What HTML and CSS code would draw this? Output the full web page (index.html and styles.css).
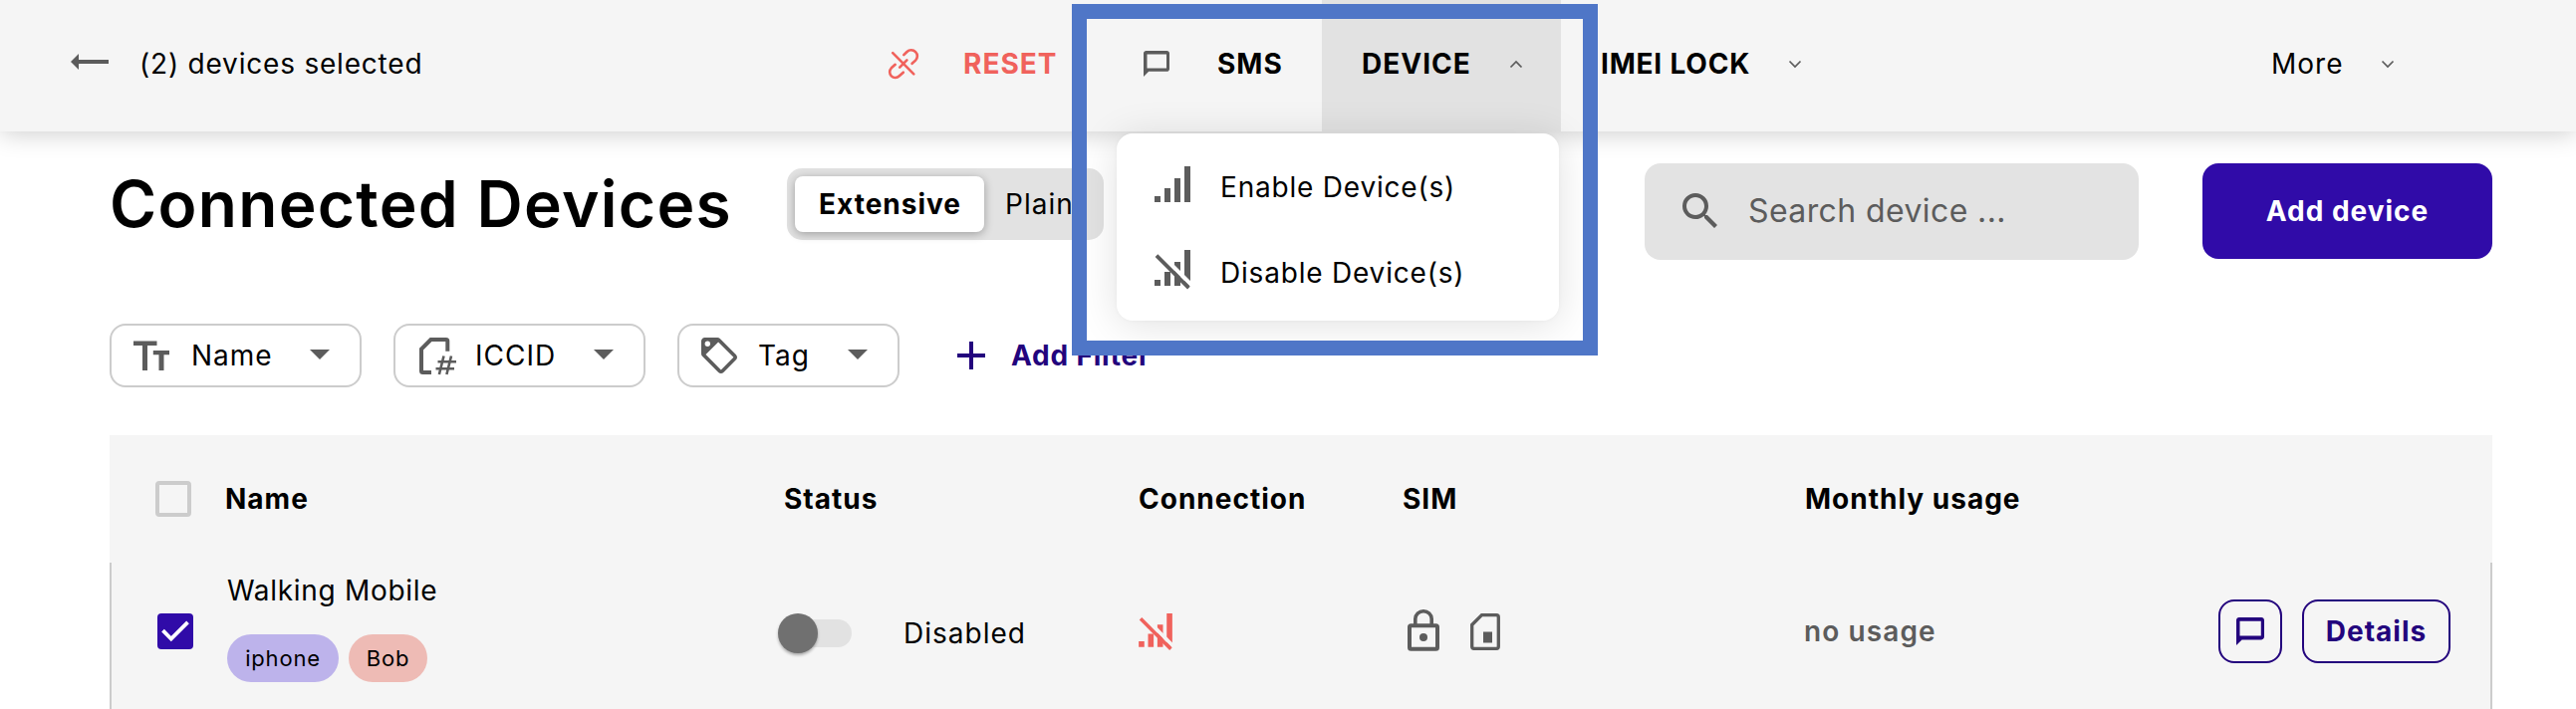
FILE: index.html
```html
<!DOCTYPE html>
<html lang="en">
<head>
<meta charset="utf-8">
<title>Connected Devices</title>
<link rel="stylesheet" href="styles.css">
</head>
<body>
<header class="bar">
  <div class="bar-item bar-back">
    <svg width="38" height="16" viewBox="0 0 38 16"><path d="M0 8l8-8v6h30v4H8v6z" fill="#5c5c5c"/></svg>
    <span>(2) devices selected</span>
  </div>
  <div class="bar-item bar-reset">
    <svg width="30" height="30" viewBox="0 0 30 30" fill="none" stroke="#f0625c" stroke-width="2.6" stroke-linecap="round"><path d="M4.2 4.2L25.3 25.3M15.3 6.2l3.2-3.2a6 6 0 0 1 8.6 0.1a6 6 0 0 1 0 8.5l-3.5 3.2M11.2 18.6l7.2-7.2M6.7 15.8l-3.9 3.5a5.7 5.7 0 0 0 0 8a5.7 5.7 0 0 0 8 0l4-3.6"/></svg>
    <b>RESET</b>
  </div>
  <div class="bar-item bar-sms">
    <svg width="26" height="26" viewBox="2 2 20 20" fill="#5c5c5c"><path d="M20 2H4c-1.1 0-2 .9-2 2v18l4-4h14c1.1 0 2-.9 2-2V4c0-1.1-.9-2-2-2zm-.3 13.5H4.7V4.700h15z"/></svg>
    <b>SMS</b>
  </div>
  <div class="bar-item bar-device">
    <b>DEVICE</b>
    <svg class="chevron up" width="14" height="9" viewBox="0 0 14 9"><path d="M1.5 7.5L7 2l5.500 5.500"/></svg>
    <div class="menu">
      <div class="menu-item">
        <svg width="36" height="36" viewBox="0 0 36 36" fill="#5c5c5c"><path d="M0 30h6v6H0zM10 22h6v14h-6zM20 12h6v24h-6zM30 0h6v36h-6z"/></svg>
        <span>Enable Device(s)</span>
      </div>
      <div class="menu-item">
        <svg width="36" height="40" viewBox="0 0 36 40" fill="#5c5c5c"><path d="M0 30h6v6H0zM10 22h6v14h-6zM20 12h6v24h-6zM30 0h6v36h-6z"/><path d="M7.500 5.500L38 36" stroke="#fff" stroke-width="4"/><path d="M2 5.700l32.400 32.400" stroke="#5c5c5c" stroke-width="3.800"/></svg>
        <span>Disable Device(s)</span>
      </div>
    </div>
  </div>
  <div class="bar-item bar-imei">
    <b>IMEI LOCK</b>
    <svg class="chevron" width="14" height="9" viewBox="0 0 14 9"><path d="M1.500 1.500L7 7l5.500-5.500"/></svg>
  </div>
  <div class="bar-item bar-more">
    <span>More</span>
    <svg class="chevron" width="14" height="9" viewBox="0 0 14 9"><path d="M1.500 1.500L7 7l5.500-5.500"/></svg>
  </div>
</header>

<main class="page">
  <section class="top">
    <h1 class="title">Connected Devices</h1>
    <div class="toggle">
      <div class="toggle-on">Extensive</div>
      <div class="toggle-off">Plain</div>
    </div>
    <div class="search">
      <svg width="35" height="35" viewBox="3 3 17.500 17.500" fill="#5c5c5c"><path d="M9.500,3A6.500,6.500 0 0,1 16,9.500C16,11.110 15.410,12.590 14.440,13.730L14.710,14H15.500L20.500,19L19,20.500L14,15.500V14.710L13.730,14.440C12.590,15.410 11.110,16 9.500,16A6.500,6.500 0 0,1 3,9.500A6.500,6.500 0 0,1 9.500,3M9.500,5C7,5 5,7 5,9.500C5,12 7,14 9.500,14C12,14 14,12 14,9.500C14,7 12,5 9.500,5Z"/></svg>
      <span>Search device ...</span>
    </div>
    <div class="add-device">Add device</div>
  </section>

  <section class="filters">
    <div class="chip chip-name">
      <svg width="36" height="30" viewBox="0 0 36 30" fill="#5c5c5c"><path d="M0 .5h23.500v4.500H14v25H9V5H0zM19.800 10H36v4.300h-5.500V30h-5V14.300h-5.700z"/></svg>
      <span>Name</span>
      <i class="caret"></i>
    </div>
    <div class="chip chip-iccid">
      <svg width="37" height="37" viewBox="0 0 37 37" fill="none" stroke="#5c5c5c"><path d="M28.300 13.700V3.500q0-1.500-1.500-1.500H11.500L2 11.500v22q0 1.500 1.500 1.500H12" stroke-width="4"/><path d="M24.500 18.500l-4.600 18.500M32 18.500L27.400 37M18.500 24.300h18.500M16.500 31.300H35" stroke-width="2.600"/></svg>
      <span>ICCID</span>
      <i class="caret"></i>
    </div>
    <div class="chip chip-tag">
      <svg width="36" height="36" viewBox="2 2 20 20" fill="#5c5c5c"><path d="M5.500,7A1.500,1.500 0 0,0 7,5.500A1.500,1.500 0 0,0 5.500,4A1.500,1.500 0 0,0 4,5.500A1.500,1.500 0 0,0 5.500,7M21.410,11.580C21.770,11.940 22,12.440 22,13C22,13.550 21.780,14.050 21.410,14.410L14.410,21.410C14.050,21.770 13.550,22 13,22C12.450,22 11.950,21.770 11.580,21.410L2.590,12.410C2.220,12.050 2,11.550 2,11V4C2,2.890 2.890,2 4,2H11C11.550,2 12.050,2.220 12.410,2.580L21.410,11.580M13,20L20,13L11.500,4.500L4.500,11.500L13,20Z"/></svg>
      <span>Tag</span>
      <i class="caret"></i>
    </div>
    <div class="add-filter">
      <svg width="28" height="28" viewBox="0 0 28 28" fill="#23047d"><path d="M12 0h4v12h12v4H16v12h-4V16H0v-4h12z"/></svg>
      <b>Add Filter</b>
    </div>
  </section>

  <section class="table">
    <div class="row head">
      <div class="cell-check"><i class="box"></i></div>
      <div>Name</div>
      <div>Status</div>
      <div>Connection</div>
      <div>SIM</div>
      <div>Monthly usage</div>
    </div>
    <div class="row device">
      <div class="cell-check">
        <svg width="36" height="36" viewBox="0 0 36 36"><rect width="36" height="36" rx="4" fill="#300ba8"/><path d="M5.500 17.200l8.300 8.300L30.500 8.800" fill="none" stroke="#fff" stroke-width="3.800"/></svg>
      </div>
      <div class="cell-name">
        <div class="device-name">Walking Mobile</div>
        <div class="tags"><span class="tag violet">iphone</span><span class="tag rose">Bob</span></div>
      </div>
      <div class="cell-status">
        <div class="switch"><i class="thumb"></i></div>
        <span>Disabled</span>
      </div>
      <div class="cell-icon">
        <svg width="34" height="37" viewBox="0 0 36 39.500" fill="#f0625c"><path d="M0 30h6v6H0zM10 22h6v14h-6zM20 12h6v24h-6zM30 0h6v36h-6z"/><path d="M7.500 5.500L38 36" stroke="#f5f5f5" stroke-width="4"/><path d="M2 5.700l32.400 32.400" stroke="#f0625c" stroke-width="3.800"/></svg>
      </div>
      <div class="cell-sim">
        <svg width="32" height="42" viewBox="0 0 32 42" fill="none" stroke="#5c5c5c" stroke-width="4"><rect x="2" y="16.300" width="28" height="23.500" rx="1.500"/><path d="M7.800 16V9.500a8.200 7.800 0 0 1 16.400 0V16" stroke-width="3.600"/><circle cx="16" cy="28" r="4" fill="#5c5c5c" stroke="none"/></svg>
        <svg width="30" height="37" viewBox="0 0 30 37" fill="none" stroke="#5c5c5c" stroke-width="3.300"><path d="M11.500 1.700h14.800a2 2 0 0 1 2 2v29.600a2 2 0 0 1-2 2H3.700a2 2 0 0 1-2-2V11.500z"/><path d="M13 18.500h9v11h-9z" fill="#5c5c5c" stroke="none"/></svg>
      </div>
      <div class="cell-usage">no usage</div>
      <div class="actions">
        <div class="btn btn-chat"><svg width="28" height="28" viewBox="2 2 20 20" fill="#23047d"><path d="M20 2H4c-1.100 0-2 .9-2 2v18l4-4h14c1.100 0 2-.9 2-2V4c0-1.100-.9-2-2-2zm-.3 13.300H4.500V4.700h15.200z"/></svg></div>
        <div class="btn btn-details">Details</div>
      </div>
    </div>
  </section>
</main>
<div class="highlight"></div>
</body>
</html>
```
FILE: styles.css
```css
* { box-sizing: border-box; }
body {
  margin: 0;
  height: 712px;
  overflow: hidden;
  position: relative;
  background: #fff;
  color: #000;
  font: 400 28px/34px Inter, "Liberation Sans", sans-serif;
  letter-spacing: 1px;
  white-space: nowrap;
}
b { font-weight: 700; }
svg { display: block; flex: none; overflow: visible; }

/* Selection bar */
.bar {
  position: relative;
  z-index: 2;
  display: flex;
  height: 132px;
  background: #f5f5f5;
  box-shadow: 0 2px 24px rgba(0, 0, 0, .2);
}
.bar-item {
  display: flex;
  align-items: center;
  height: 132px;
  padding-bottom: 4px;
}
.bar-back { width: 892px; padding-left: 71px; gap: 31px; letter-spacing: .8px; }
.bar-back svg { margin-bottom: 4px; }
.bar-reset { width: 256px; gap: 45px; color: #f0625c; }
.bar-sms { width: 179px; gap: 48px; }
.bar-device {
  position: relative;
  width: 240px;
  padding: 0 38px 4px 40px;
  justify-content: space-between;
  background: #e2e2e2;
}
.bar-imei { width: 281px; padding: 0 39px 4px 40px; justify-content: space-between; letter-spacing: .8px; }
.bar-more { width: 203px; margin-left: 392px; padding: 0 39px 4px 40px; justify-content: space-between; }
.chevron { fill: none; stroke: #5c5c5c; stroke-width: 1.7; }

/* Device drop-down */
.menu {
  position: absolute;
  top: 134px;
  right: 2px;
  width: 444px;
  height: 188px;
  padding-top: 11px;
  border-radius: 16px;
  background: #fff;
  box-shadow: 0 4px 40px rgba(0, 0, 0, .12), 0 0 4px rgba(0, 0, 0, .04);
}
.menu-item {
  display: flex;
  align-items: center;
  gap: 30px;
  height: 86px;
  padding-left: 38px;
  letter-spacing: .8px;
}
.menu-item svg { margin-bottom: 6px; }

/* Page head */
.page { padding: 32px 84px 0 110px; }
.top { display: flex; align-items: flex-start; height: 97px; }
.title {
  width: 680px;
  margin: 0;
  font-size: 64px;
  font-weight: 600;
  line-height: 82px;
  letter-spacing: 1.3px;
}
.toggle {
  display: flex;
  width: 318px;
  height: 72px;
  margin-top: 5px;
  padding: 8px;
  border-radius: 15px;
  background: #e2e2e2;
  line-height: 56px;
}
.toggle-on {
  width: 190px;
  padding-left: 1px;
  border-radius: 8px;
  background: #fff;
  font-weight: 700;
  text-align: center;
  box-shadow: 0 2px 10px rgba(0, 0, 0, .3);
}
.toggle-off { padding-left: 21px; }
.search {
  display: flex;
  align-items: center;
  gap: 31px;
  width: 496px;
  height: 97px;
  margin-left: 543px;
  padding-left: 38px;
  padding-bottom: 1px;
  border-radius: 16px;
  background: #e3e3e3;
  color: #5c5c5c;
  font-size: 32px;
  letter-spacing: .4px;
}
.search svg { margin-bottom: 2px; }
.add-device {
  width: 291px;
  height: 96px;
  margin-left: 64px;
  border-radius: 16px;
  background: #300ba8;
  color: #fff;
  font-weight: 700;
  line-height: 96px;
  text-align: center;
}

/* Filters */
.filters { display: flex; gap: 32px; margin-top: 64px; }
.chip {
  display: flex;
  align-items: center;
  height: 64px;
  padding: 0 30px 0 22px;
  border: 2px solid #ccc;
  border-radius: 16px;
}
.chip-name { width: 253px; }
.chip-iccid { width: 253px; padding-left: 24px; }
.chip-tag { width: 223px; }
.chip span { margin-left: 21px; }
.chip-name span { margin-left: 22px; }
.chip-iccid span { margin-left: 19px; }
.caret {
  margin-left: auto;
  margin-bottom: 2px;
  border: 10px solid transparent;
  border-top-color: #5c5c5c;
  border-bottom: 0;
}
.add-filter { display: flex; align-items: center; gap: 26px; margin-left: 26px; color: #23047d; letter-spacing: .8px; }

/* Table */
.table { height: 275px; margin-top: 48px; background: #f5f5f5; }
.row { display: grid; align-items: center; }
.head {
  grid-template-columns: 116px 561px 356px 265px 404px 1fr;
  height: 128px;
  font-weight: 700;
}
.device {
  grid-template-columns: 116px 560px 355px 265px 403px 200px 1fr;
  height: 147px;
  padding-bottom: 9px;
  border: 2px solid #ccc;
  border-width: 0 2px;
}
.cell-check { padding-left: 46px; }
.box { display: block; width: 36px; height: 36px; border: 4px solid #ccc; border-radius: 4px; }
.cell-name { padding-bottom: 7px; }
.device-name { letter-spacing: .7px; }
.tags { display: flex; gap: 10px; margin-top: 27px; }
.tag { height: 48px; border-radius: 24px; font-size: 22px; line-height: 48px; text-align: center; letter-spacing: .8px; }
.violet { width: 112px; background: #bdb3eb; }
.rose { width: 79px; background: #eebbb5; }
.cell-status { display: flex; align-items: center; padding-top: 4px; margin-left: -1px; gap: 52px; }
.switch { position: relative; width: 68px; height: 28px; border-radius: 14px; background: #e2e2e2; }
.thumb {
  position: absolute;
  left: -6px;
  top: -6px;
  width: 40px;
  height: 40px;
  border-radius: 50%;
  background: #707070;
  box-shadow: 0 2px 3px rgba(0, 0, 0, .3);
}
.cell-sim { display: flex; align-items: center; gap: 31px; padding-left: 5px; }
.cell-sim svg:first-child { margin-bottom: 2px; }
.cell-usage { color: #5c5c5c; font-weight: 600; letter-spacing: 1.1px; }
.actions { display: flex; justify-content: flex-end; gap: 20px; padding-right: 40px; }
.btn {
  display: flex;
  align-items: center;
  justify-content: center;
  height: 64px;
  border: 2px solid #23047d;
  border-radius: 16px;
  color: #23047d;
  font-weight: 700;
}
.btn-chat { width: 64px; }
.btn-details { width: 149px; }

/* Callout frame */
.highlight {
  position: absolute;
  z-index: 3;
  left: 1076px;
  top: 4px;
  width: 528px;
  height: 353px;
  border: 15px solid #4f76c7;
}
```
